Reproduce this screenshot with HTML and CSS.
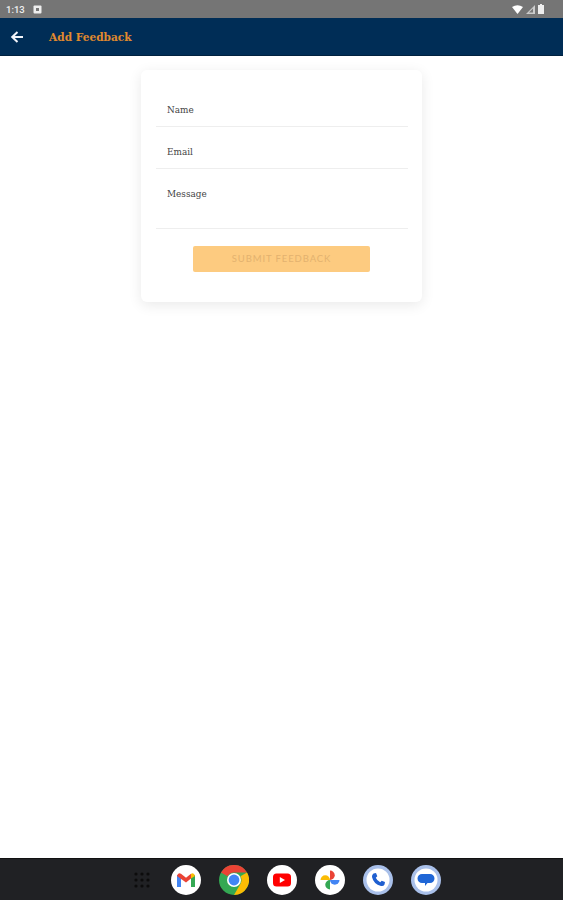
FILE: index.html
```html
<!DOCTYPE html>
<html lang="en">
<head>
    <meta charset="UTF-8">
    <meta name="viewport" content="width=device-width, initial-scale=1.0">
    <title>Add Feedback</title>
    <link rel="stylesheet" href="styles.css">
</head>
<body>
    <div class="status-bar">
        <div class="status-left">
            <span class="clock">1:13</span>
            <svg class="status-icon" width="9" height="9" viewBox="0 0 9 9"><rect x="0.5" y="0.5" width="8" height="8" rx="1" fill="#eee"/><rect x="3" y="3" width="3" height="3" fill="#777"/></svg>
        </div>
        <div class="status-right">
            <svg width="11" height="9" viewBox="0 0 11 9"><path d="M0 2 Q5.5 -1.5 11 2 L5.5 9 Z" fill="#fff"/></svg>
            <svg width="9" height="9" viewBox="0 0 9 9"><path d="M9 0 V9 H0 Z" fill="#ccc"/><path d="M7 3.5 V7.5 H3 Z" fill="#777"/></svg>
            <svg width="6" height="10" viewBox="0 0 6 10"><path d="M2 0 H4 V1 H6 V10 H0 V1 H2 Z" fill="#eee"/></svg>
        </div>
    </div>

    <header class="app-bar">
        <svg class="back-icon" width="14" height="14" viewBox="0 0 14 14"><path d="M13 7 H3 M7.5 2 L2.2 7 L7.5 12" fill="none" stroke="#f2f4fa" stroke-width="2"/></svg>
        <h1>Add Feedback</h1>
    </header>

    <main class="content">
        <form class="card">
            <div class="field">Name</div>
            <div class="field">Email</div>
            <div class="field field-message">Message</div>
            <div class="submit">SUBMIT FEEDBACK</div>
        </form>
    </main>

    <nav class="dock">
        <svg class="apps" width="16" height="16" viewBox="0 0 16 16" fill="#0c0c0c">
            <circle cx="2" cy="2" r="1.6"/><circle cx="8" cy="2" r="1.6"/><circle cx="14" cy="2" r="1.6"/>
            <circle cx="2" cy="8" r="1.6"/><circle cx="8" cy="8" r="1.6"/><circle cx="14" cy="8" r="1.6"/>
            <circle cx="2" cy="14" r="1.6"/><circle cx="8" cy="14" r="1.6"/><circle cx="14" cy="14" r="1.6"/>
        </svg>
        <!-- gmail -->
        <svg class="app" viewBox="0 0 30 30">
            <circle cx="15" cy="15" r="15" fill="#fff"/>
            <path d="M6 22 V10 L10 10 V22 Z" fill="#4285f4"/>
            <path d="M20 22 V10 L24 10 V22 Z" fill="#34a853"/>
            <path d="M6 11 Q7 7 10 8.8 L15 12.8 L15 17.5 Z" fill="#ea4335"/>
            <path d="M15 12.8 L20 8.8 L20 13.5 L15 17.5 Z" fill="#ea4335"/>
            <path d="M20 8.8 Q23 7 24 11 L20 13.5 Z" fill="#fbbc04"/>
        </svg>
        <!-- chrome -->
        <svg class="app" viewBox="0 0 30 30">
            <circle cx="15" cy="15" r="15" fill="#34a853"/>
            <path d="M2 7.5 A15 15 0 0 1 28 7.5 H15 A7.5 7.5 0 0 0 8.5 11.3 Z" fill="#ea4335"/>
            <path d="M28 7.5 A15 15 0 0 1 15 30 L21.5 18.7 A7.5 7.5 0 0 0 21.5 11.3 Z" fill="#fbbc04"/>
            <circle cx="15" cy="15" r="7" fill="#fff"/>
            <circle cx="15" cy="15" r="5.4" fill="#4285f4"/>
        </svg>
        <!-- youtube -->
        <svg class="app" viewBox="0 0 30 30">
            <circle cx="15" cy="15" r="15" fill="#fff"/>
            <rect x="6" y="8.5" width="18" height="13" rx="3.5" fill="#f00"/>
            <path d="M12.8 12 L18 15 L12.8 18 Z" fill="#fff"/>
        </svg>
        <!-- photos: four half-petals of a pinwheel -->
        <svg class="app" viewBox="0 0 30 30">
            <circle cx="15" cy="15" r="15" fill="#fff"/>
            <path d="M15 15 H5.5 A4.75 4.75 0 0 1 15 15 Z" fill="#fbbc04"/>
            <path d="M15 15 V5.5 A4.75 4.75 0 0 1 15 15 Z" fill="#ea4335"/>
            <path d="M15 15 H24.5 A4.75 4.75 0 0 1 15 15 Z" fill="#4285f4"/>
            <path d="M15 15 V24.5 A4.75 4.75 0 0 1 15 15 Z" fill="#34a853"/>
        </svg>
        <!-- phone -->
        <svg class="app" viewBox="0 0 30 30">
            <circle cx="15" cy="15" r="15" fill="#a9c0ea"/>
            <circle cx="15" cy="15" r="11.5" fill="#fff"/>
            <path d="M10.5 8.5 L13 8 L14.3 11.3 L12.8 12.8 Q14 15.8 17.2 17.2 L18.7 15.7 L22 17 L21.5 19.5 Q20.5 21.5 18 21 Q10.5 19 9 12 Q8.8 9.5 10.5 8.5 Z" fill="#1f5fd0"/>
        </svg>
        <!-- messages -->
        <svg class="app" viewBox="0 0 30 30">
            <circle cx="15" cy="15" r="15" fill="#a9c0ea"/>
            <circle cx="15" cy="15" r="11.5" fill="#fff"/>
            <path d="M11 9 H19 A4.5 4.5 0 0 1 19 18 H16.5 L14 21 V18 H11 A4.5 4.5 0 0 1 11 9 Z" fill="#1f66d6"/>
        </svg>
    </nav>
</body>
</html>
```

FILE: styles.css
```css
html, body {
    height: 100%;
}

body {
    margin: 0;
    display: flex;
    flex-direction: column;
    background-color: #fff;
    font-family: "DejaVu Serif", serif;
}

.status-bar {
    height: 18px;
    padding: 0 19px 0 6px;
    display: flex;
    justify-content: space-between;
    align-items: center;
    box-sizing: border-box;
    background-color: #757575;
    color: #eee;
}

.status-left, .status-right {
    display: flex;
    align-items: center;
}

.clock {
    width: 27px;
    font-family: "Roboto", sans-serif;
    font-size: 9.5px;
    font-weight: 500;
}

.status-right {
    gap: 3px;
}

.app-bar {
    height: 38px;
    padding-left: 10px;
    display: flex;
    align-items: center;
    box-sizing: border-box;
    background-color: #002d56;
    border-bottom: 1px solid #00213f;
}

.back-icon {
    margin-right: 25px;
}

.app-bar h1 {
    margin: 0;
    color: #e08a2e;
    font-size: 10.6px;
    font-weight: bold;
}

.content {
    flex: 1;
    padding-top: 14px;
    display: flex;
    justify-content: center;
    align-items: flex-start;
}

.card {
    width: 281px;
    height: 232px;
    padding: 15px 14px 0 15px;
    box-sizing: border-box;
    background-color: #fff;
    border-radius: 6px;
    box-shadow: 0 3px 14px rgba(0, 0, 0, 0.09);
}

.field {
    height: 42px;
    padding: 19px 0 0 11px;
    box-sizing: border-box;
    color: #444;
    font-size: 8.9px;
    line-height: 12px;
    border-bottom: 1px solid #eee;
}

.field-message {
    height: 60px;
}

.submit {
    width: 177px;
    height: 26px;
    margin: 17px 0 0 37px;
    padding-bottom: 2px;
    display: flex;
    justify-content: center;
    align-items: center;
    box-sizing: border-box;
    background-color: #fdcb80;
    border-radius: 2px;
    color: #e3b26f;
    font-family: "Lato", sans-serif;
    font-size: 9.5px;
    letter-spacing: 0.9px;
}

.dock {
    height: 42px;
    padding-left: 12px;
    display: flex;
    justify-content: center;
    align-items: center;
    gap: 18px;
    box-sizing: border-box;
    background-color: #202124;
    border-top: 1px solid #111;
}

.apps {
    margin-right: 3px;
}

.app {
    width: 30px;
    height: 30px;
}
```
